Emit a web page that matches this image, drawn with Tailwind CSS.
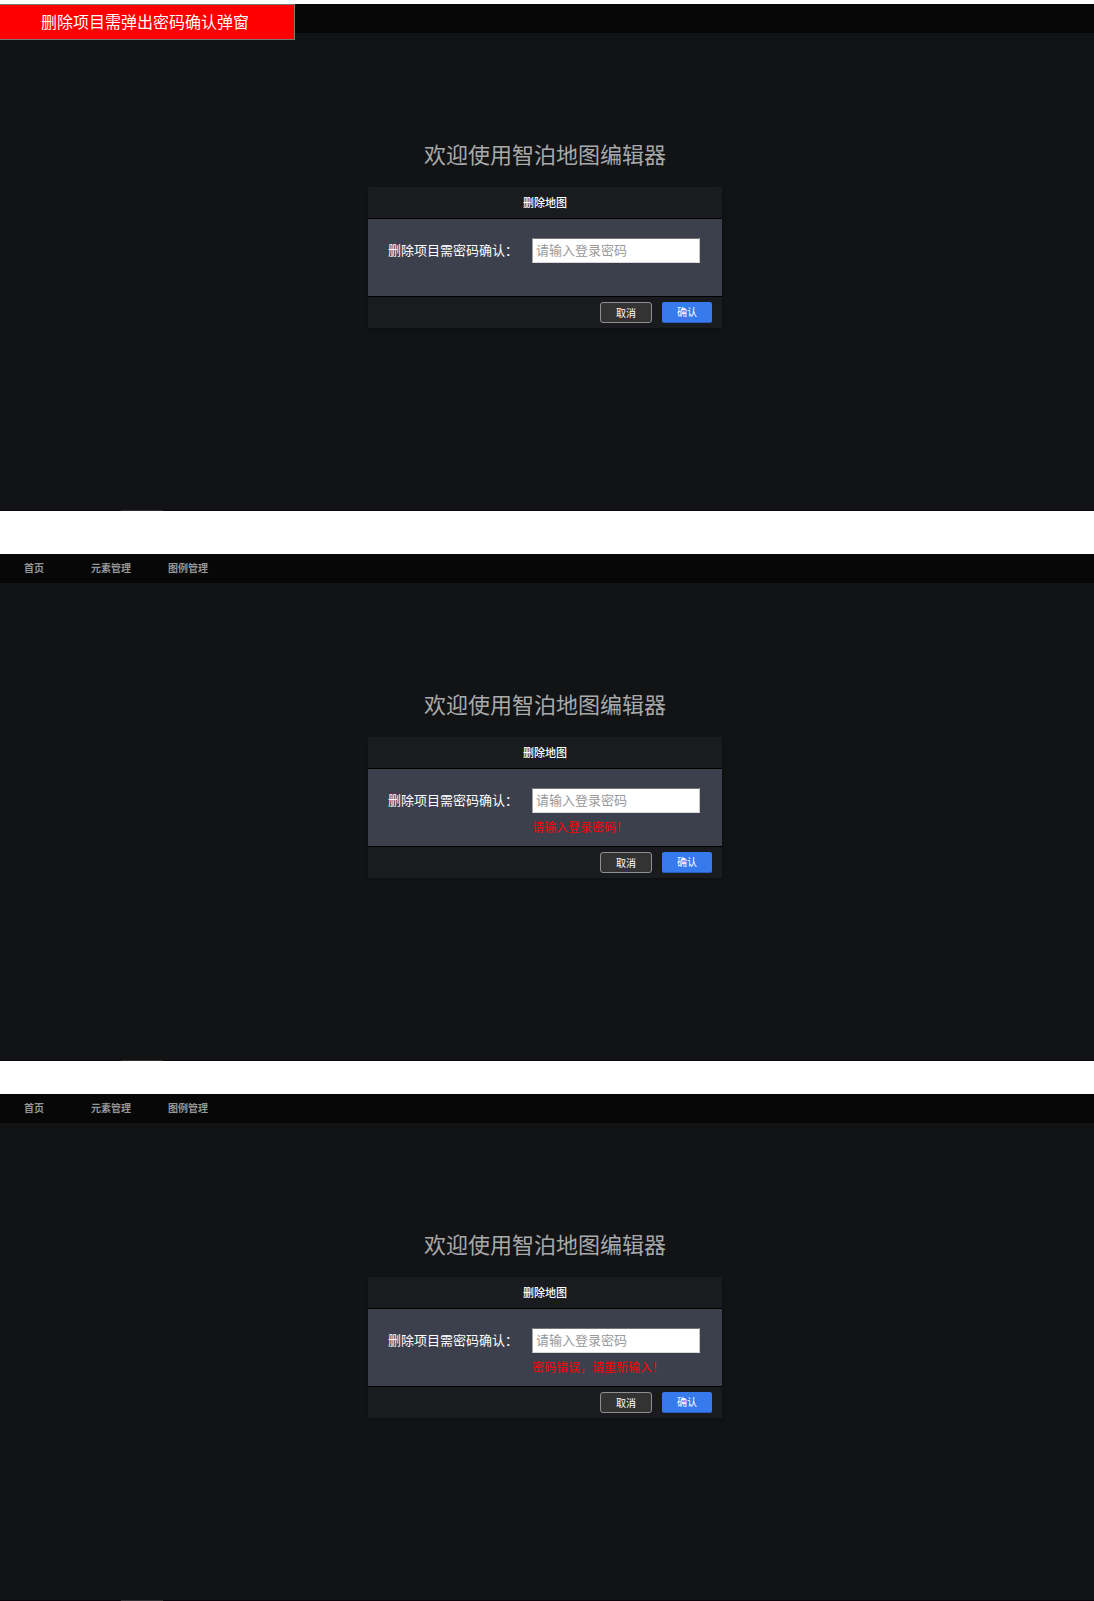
<!DOCTYPE html>
<html lang="zh-CN">
<head>
<meta charset="utf-8">
<meta name="viewport" content="width=device-width, initial-scale=1">
<title>智泊地图编辑器</title>
<script src="https://cdn.jsdelivr.net/npm/@tailwindcss/browser@4"></script>
</head>
<body class="bg-white font-['Noto_Sans_CJK_SC',sans-serif]">
<div class="flex flex-col pt-1">

  <!-- Initial state, annotated -->
  <section class="relative flex min-h-[507px] flex-col border-b border-[#08060c] bg-[#111315]">
    <header class="h-[29px] bg-[#070707]"></header>
    <p class="absolute top-0 left-0 h-9 w-[295px] border border-l-0 border-[#797979] bg-[#ff0000] pt-1 pl-[41px] text-[16px] leading-6 text-white">删除项目需弹出密码确认弹窗</p>
    <main class="flex flex-1 flex-col items-center gap-[18px] pt-[104px] pr-1">
      <h1 class="text-[22px] leading-8 text-[#a9a9a9]">欢迎使用智泊地图编辑器</h1>
      <form class="flex w-[354px] max-w-full flex-col bg-[#1a1b1e] shadow-md">
        <h2 class="h-8 border-b border-black text-center text-[11px] leading-[30px] font-medium text-white">删除地图</h2>
        <div class="flex h-[77px] items-start gap-3 bg-[#3c404d] pt-[19px] pr-[22px] pl-5">
          <label for="password-1" class="flex-1 text-[13px] leading-6 whitespace-nowrap text-white">删除项目需密码确认：</label>
          <div class="w-[168px]">
            <input id="password-1" type="password" placeholder="请输入登录密码" class="block h-[25px] w-full border border-t-[#767676] border-r-[#c4c4c4] border-b-[#d8d8d8] border-l-[#a0a0a0] bg-white px-[3px] pb-[2px] text-[13px] leading-5 text-black placeholder:text-[#999999]">
          </div>
        </div>
        <div class="flex h-8 items-start justify-end gap-[10px] border-t border-black pt-[5px] pr-[10px]">
          <button type="button" class="h-[21px] w-[52px] rounded-[3px] border border-[#8f8f8f] bg-[#333333] text-[10px] leading-4 text-white">取消</button>
          <button type="submit" class="h-[21px] w-[50px] rounded-[2px] border-b border-[#2860c0] bg-[#377aee] text-[10px] leading-4 text-white">确认</button>
        </div>
      </form>
    </main>
    <span class="absolute -bottom-px left-[121px] h-px w-[42px] bg-[#2f2f32]"></span>
  </section>

  <!-- Empty password -->
  <section class="relative mt-[43px] flex min-h-[507px] flex-col border-b border-[#08060c] bg-[#111315]">
    <header class="h-[29px] bg-[#070707]">
      <nav class="flex pl-6 text-[10px] leading-7 font-bold text-[#959595]">
        <a href="#" class="w-[67px]">首页</a>
        <a href="#" class="w-[77px]">元素管理</a>
        <a href="#">图例管理</a>
      </nav>
    </header>
    <main class="flex flex-1 flex-col items-center gap-[18px] pt-[104px] pr-1">
      <h1 class="text-[22px] leading-8 text-[#a9a9a9]">欢迎使用智泊地图编辑器</h1>
      <form class="flex w-[354px] max-w-full flex-col bg-[#1a1b1e] shadow-md">
        <h2 class="h-8 border-b border-black text-center text-[11px] leading-[30px] font-medium text-white">删除地图</h2>
        <div class="flex h-[77px] items-start gap-3 bg-[#3c404d] pt-[19px] pr-[22px] pl-5">
          <label for="password-2" class="flex-1 text-[13px] leading-6 whitespace-nowrap text-white">删除项目需密码确认：</label>
          <div class="w-[168px]">
            <input id="password-2" type="password" placeholder="请输入登录密码" aria-describedby="error-2" class="block h-[25px] w-full border border-t-[#767676] border-r-[#c4c4c4] border-b-[#d8d8d8] border-l-[#a0a0a0] bg-white px-[3px] pb-[2px] text-[13px] leading-5 text-black placeholder:text-[#999999]">
            <p id="error-2" class="pt-1 text-[12px] leading-5 text-[#ff0000]">请输入登录密码！</p>
          </div>
        </div>
        <div class="flex h-8 items-start justify-end gap-[10px] border-t border-black pt-[5px] pr-[10px]">
          <button type="button" class="h-[21px] w-[52px] rounded-[3px] border border-[#8f8f8f] bg-[#333333] text-[10px] leading-4 text-white">取消</button>
          <button type="submit" class="h-[21px] w-[50px] rounded-[2px] border-b border-[#2860c0] bg-[#377aee] text-[10px] leading-4 text-white">确认</button>
        </div>
      </form>
    </main>
    <span class="absolute -bottom-px left-[121px] h-px w-[42px] bg-[#2f2f32]"></span>
  </section>

  <!-- Wrong password -->
  <section class="relative mt-[33px] flex min-h-[507px] flex-col border-b border-[#08060c] bg-[#111315]">
    <header class="h-[29px] bg-[#070707]">
      <nav class="flex pl-6 text-[10px] leading-7 font-bold text-[#959595]">
        <a href="#" class="w-[67px]">首页</a>
        <a href="#" class="w-[77px]">元素管理</a>
        <a href="#">图例管理</a>
      </nav>
    </header>
    <main class="flex flex-1 flex-col items-center gap-[18px] pt-[104px] pr-1">
      <h1 class="text-[22px] leading-8 text-[#a9a9a9]">欢迎使用智泊地图编辑器</h1>
      <form class="flex w-[354px] max-w-full flex-col bg-[#1a1b1e] shadow-md">
        <h2 class="h-8 border-b border-black text-center text-[11px] leading-[30px] font-medium text-white">删除地图</h2>
        <div class="flex h-[77px] items-start gap-3 bg-[#3c404d] pt-[19px] pr-[22px] pl-5">
          <label for="password-3" class="flex-1 text-[13px] leading-6 whitespace-nowrap text-white">删除项目需密码确认：</label>
          <div class="w-[168px]">
            <input id="password-3" type="password" placeholder="请输入登录密码" aria-describedby="error-3" class="block h-[25px] w-full border border-t-[#767676] border-r-[#c4c4c4] border-b-[#d8d8d8] border-l-[#a0a0a0] bg-white px-[3px] pb-[2px] text-[13px] leading-5 text-black placeholder:text-[#999999]">
            <p id="error-3" class="pt-1 text-[12px] leading-5 text-[#ff0000]">密码错误，请重新输入！</p>
          </div>
        </div>
        <div class="flex h-8 items-start justify-end gap-[10px] border-t border-black pt-[5px] pr-[10px]">
          <button type="button" class="h-[21px] w-[52px] rounded-[3px] border border-[#8f8f8f] bg-[#333333] text-[10px] leading-4 text-white">取消</button>
          <button type="submit" class="h-[21px] w-[50px] rounded-[2px] border-b border-[#2860c0] bg-[#377aee] text-[10px] leading-4 text-white">确认</button>
        </div>
      </form>
    </main>
    <span class="absolute -bottom-px left-[121px] h-px w-[42px] bg-[#2f2f32]"></span>
  </section>

</div>
</body>
</html>
